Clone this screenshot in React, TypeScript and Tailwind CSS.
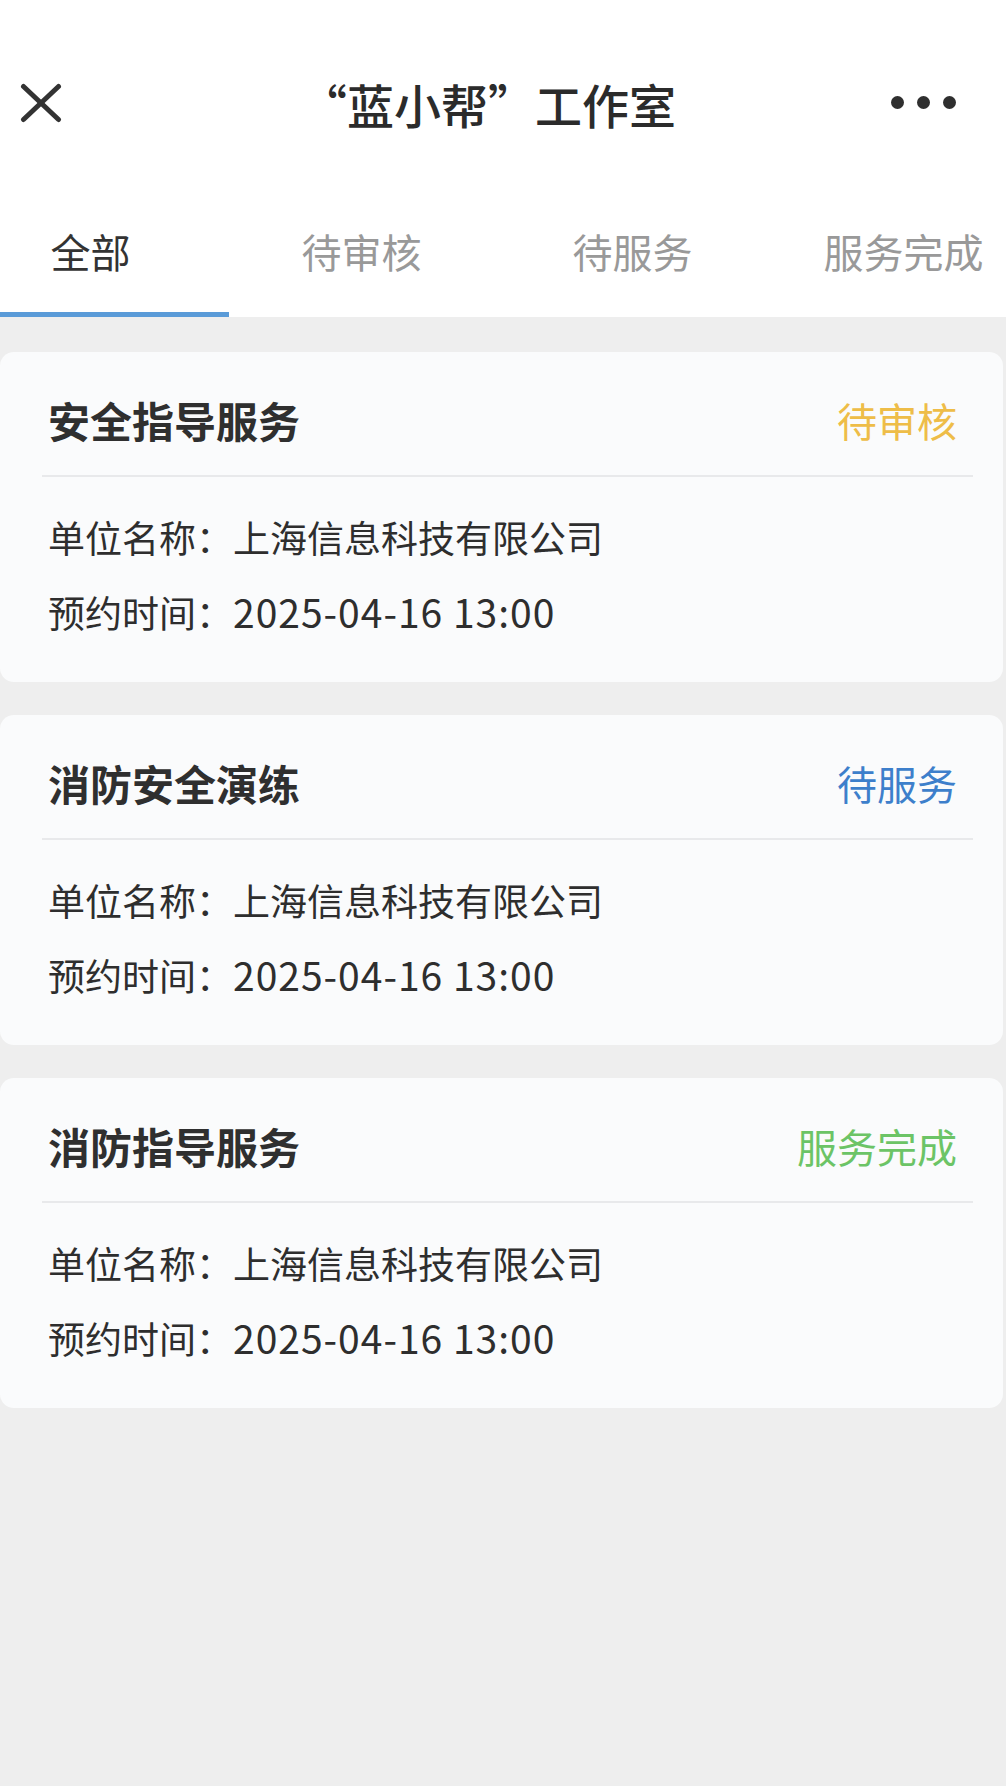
import React from "react";

const FONT = { fontFamily: '"Noto Sans CJK SC", "Noto Sans", sans-serif' };

type Item = { title: string; status: string; color: string };

const items: Item[] = [
  { title: "安全指导服务", status: "待审核", color: "text-[#eebd48]" },
  { title: "消防安全演练", status: "待服务", color: "text-[#3d7fcb]" },
  { title: "消防指导服务", status: "服务完成", color: "text-[#6cc466]" },
];

function Card({ item }: { item: Item }) {
  return (
    <div className="mr-[3px] rounded-[14px] bg-[#fafbfc] pb-[33px]">
      <div className="flex items-center justify-between pl-[48px] pr-[46px] pt-[47px]">
        <span className="text-[42px] font-bold leading-[42px] text-[#2f2f2f]">{item.title}</span>
        <span className={`text-[40px] leading-[42px] ${item.color}`}>{item.status}</span>
      </div>
      <div className="ml-[42px] mr-[30px] mt-[34px] h-[2px] bg-[#e8e9eb]" />
      <div className="mt-[23px] pl-[48px] text-[37px] leading-[74px] text-[#2e2e2e]">
        <div>单位名称：上海信息科技有限公司</div>
        <div>
          预约时间：<span className="text-[39px] tracking-[1px]">2025-04-16 13:00</span>
        </div>
      </div>
    </div>
  );
}

export default function App() {
  const tabs = ["全部", "待审核", "待服务", "服务完成"];
  return (
    <div className="min-h-[1786px] w-[1006px] bg-[#eeeeee]" style={FONT}>
      <div className="bg-white">
        <div className="relative flex h-[210px] items-center justify-center">
          <svg
            className="absolute left-[20px] top-[83px]"
            width="42"
            height="40"
            viewBox="0 0 42 40"
            fill="none"
            stroke="#333333"
            strokeWidth="5"
            strokeLinecap="round"
          >
            <line x1="3.5" y1="3.5" x2="38.5" y2="36.5" />
            <line x1="38.5" y1="3.5" x2="3.5" y2="36.5" />
          </svg>
          <span className="ml-[-30px] mt-[-4px] text-[47px] font-medium leading-none text-[#2b2b2b]">“蓝小帮”工作室</span>
          <div className="absolute left-[891px] top-[96px] flex gap-[13px]">
            <span className="h-[13px] w-[13px] rounded-full bg-[#2f2f2f]" />
            <span className="h-[13px] w-[13px] rounded-full bg-[#2f2f2f]" />
            <span className="h-[13px] w-[13px] rounded-full bg-[#2f2f2f]" />
          </div>
        </div>
        <div className="overflow-hidden">
          <div className="ml-[-45px] flex h-[82px] w-[1084px] items-center">
            {tabs.map((t, i) => (
              <div
                key={t}
                className={`w-[271px] text-center text-[40px] leading-none ${
                  i === 0 ? "text-[#333333]" : "text-[#999999]"
                }`}
              >
                {t}
              </div>
            ))}
          </div>
        </div>
        <div className="h-[20px]" />
        <div className="h-[5px] w-[229px] bg-[#5a9bd8]" />
      </div>
      <div className="flex flex-col gap-[33px] pt-[35px]">
        {items.map((it) => (
          <Card key={it.title} item={it} />
        ))}
      </div>
    </div>
  );
}
